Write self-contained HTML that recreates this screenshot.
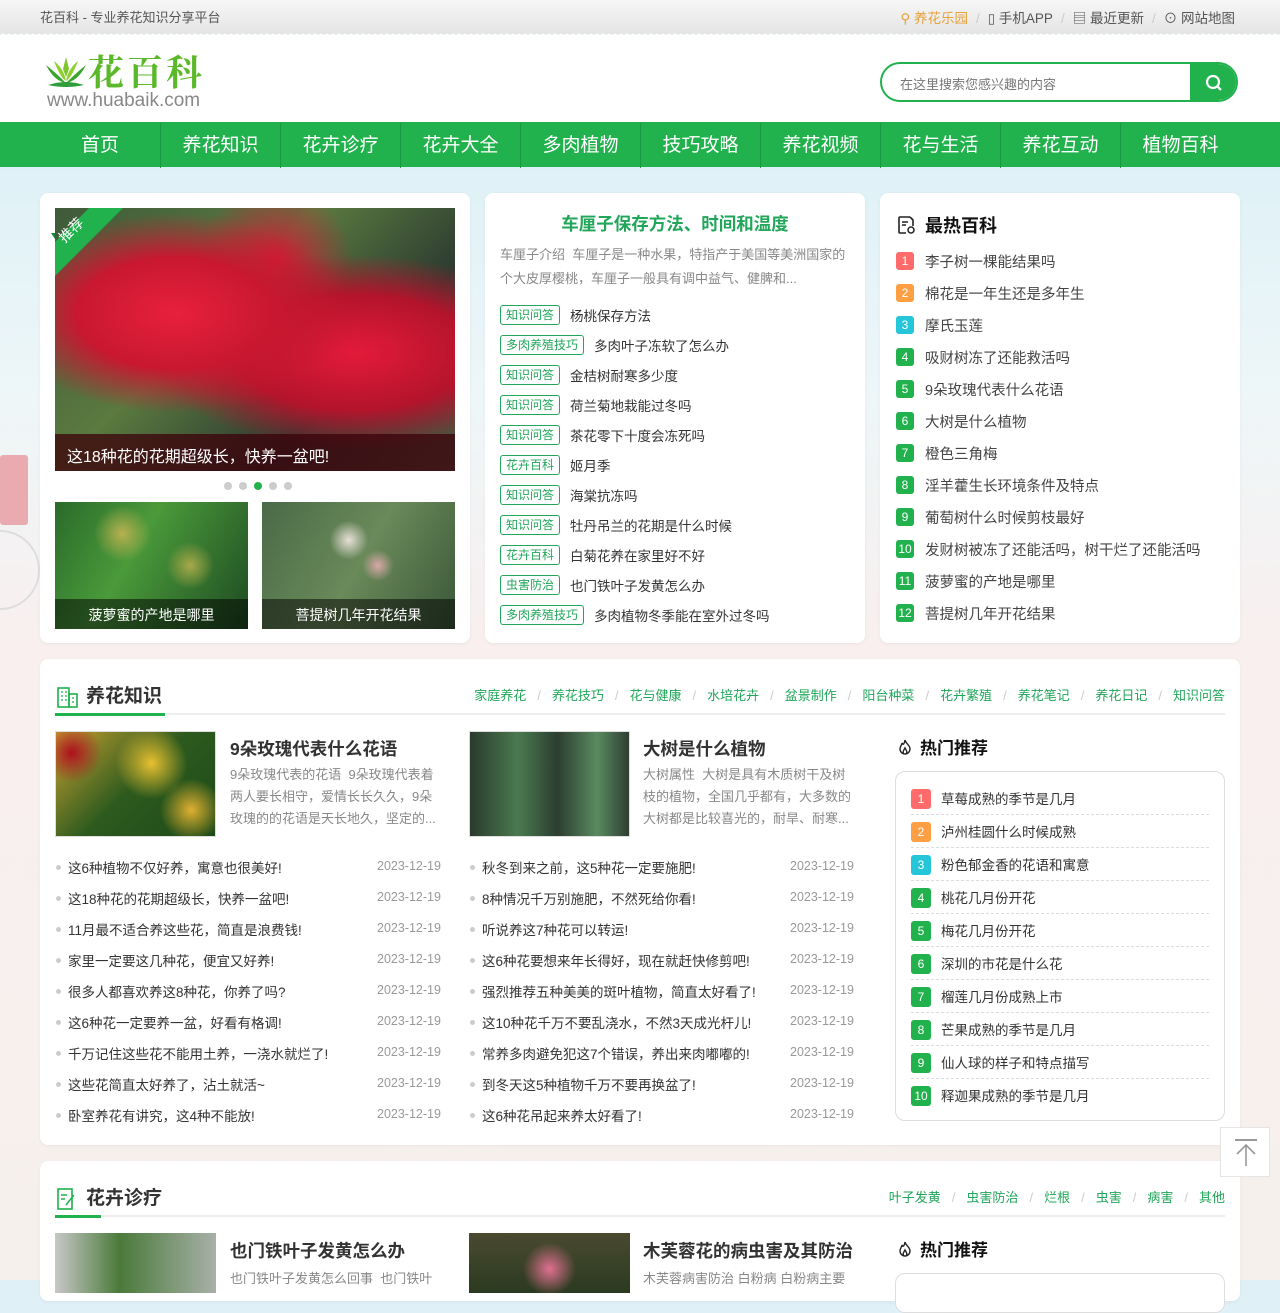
<!DOCTYPE html>
<html><head><meta charset="utf-8"><style>
*{margin:0;padding:0;box-sizing:border-box}
body{width:1280px;height:1280px;overflow:hidden;position:relative;font-family:"Liberation Sans","Noto Sans CJK SC",sans-serif;background:linear-gradient(180deg,#dff1f7 167px,#eef6f8 400px,#f8efee 650px,#f6f0ed 1280px);color:#333}
.a{position:absolute}
.top{left:0;top:0;width:1280px;height:34px;background:linear-gradient(#f7f7f7,#e4e4e4);font-size:13px;color:#555}
.zig{left:0;top:32px;width:1280px;height:4px;background:radial-gradient(circle at 3px 4px,#fff 2.2px,transparent 2.6px) 0 0/6px 4px}
.hdr{left:0;top:35px;width:1280px;height:87px;background:#fff}
.nav{left:0;top:122px;width:1280px;height:45px;background:#21b14d}
.nav span{position:absolute;top:1px;width:120px;height:45px;line-height:45px;text-align:center;color:#fff;font-size:19px;border-left:1px solid #1a9a47}
.card{background:#fff;border-radius:8px;box-shadow:0 1px 4px rgba(0,0,0,.05)}
.tag{position:absolute;left:500px;height:20px;line-height:18px;border:1px solid #21a65a;color:#21a65a;font-size:12px;padding:0 5px;border-radius:3px}
.tt{position:absolute;font-size:13.5px;color:#333}
.bd{position:absolute;width:18px;height:18px;border-radius:3px;color:#fff;font-size:12px;text-align:center;line-height:18px;background:#21b14d}
.ht{position:absolute;left:925px;font-size:14.5px;color:#444}
.li{position:absolute;font-size:13.5px;color:#333}
.li:before{content:"";position:absolute;left:-12px;top:8px;width:5px;height:5px;border-radius:50%;background:#ccc}
.dt{position:absolute;font-size:12.5px;color:#999}
.hr2{position:absolute;left:941px;font-size:13.5px;color:#333}
.dash{position:absolute;left:911px;width:298px;border-top:1px dashed #ddd}
.sl{color:#ccc;margin:0 7px}
.sk{color:#ccc;margin:0 11px}
</style></head><body>
<div class="a top"><span class="a" style="left:40px;top:7px">花百科 - 专业养花知识分享平台</span>
<span class="a" style="right:45px;top:7px;color:#555;font-size:13.5px"><span style="color:#e6a23c">⚲ 养花乐园</span><span class="sk" style="margin:0 8px">/</span>▯ 手机APP<span class="sk" style="margin:0 8px">/</span>▤ 最近更新<span class="sk" style="margin:0 8px">/</span>⊙ 网站地图</span></div>
<div class="a zig"></div>
<div class="a hdr">
<svg class="a" style="left:44px;top:20px" width="44" height="36" viewBox="0 0 44 36"><path d="M22 2 L25 14 L22 22 L19 14Z" fill="#7cc52b"/><path d="M2 10 Q10 26 22 28 Q12 18 2 10Z" fill="#3aa52c"/><path d="M42 10 Q34 26 22 28 Q32 18 42 10Z" fill="#3aa52c"/><path d="M10 6 Q16 22 22 26 Q20 14 10 6Z" fill="#8ccf2e"/><path d="M34 6 Q28 22 22 26 Q24 14 34 6Z" fill="#8ccf2e"/><path d="M4 30 Q22 24 40 30 Q22 34 4 30Z" fill="#2e9e3a"/></svg>
<span class="a" style="left:88px;top:14px;font-size:36px;font-weight:bold;color:#5bb82a;letter-spacing:3px;line-height:44px;font-family:'Noto Serif CJK SC',serif">花百科</span>
<span class="a" style="left:47px;top:55px;font-size:19px;color:#888;line-height:22px">www.huabaik.com</span>
<div class="a" style="left:880px;top:27px;width:358px;height:40px;border:2px solid #21b14d;border-radius:20px;overflow:hidden"><span class="a" style="left:18px;top:10px;font-size:13px;color:#777">在这里搜索您感兴趣的内容</span><div class="a" style="left:308px;top:0;width:50px;height:36px;background:#21b14d"><svg class="a" style="left:14px;top:9px" width="20" height="20" viewBox="0 0 20 20"><circle cx="9" cy="9" r="6" fill="none" stroke="#fff" stroke-width="2.2"/><path d="M13 13 L17 17" stroke="#fff" stroke-width="2.2"/></svg></div></div>
</div>
<div class="a nav">
<span style="left:40px;border:0">首页</span><span style="left:160px">养花知识</span><span style="left:280px">花卉诊疗</span><span style="left:400px">花卉大全</span><span style="left:520px">多肉植物</span><span style="left:640px">技巧攻略</span><span style="left:760px">养花视频</span><span style="left:880px">花与生活</span><span style="left:1000px">养花互动</span><span style="left:1120px">植物百科</span></div>
<!-- decor left -->
<div class="a" style="left:0;top:455px;width:28px;height:70px;background:#e9aab0;border-radius:3px"></div>
<div class="a" style="left:-40px;top:530px;width:80px;height:80px;border-radius:50%;border:2px solid #ddd"></div>
<!-- card 1 -->
<div class="a card" style="left:40px;top:193px;width:430px;height:450px">
<div class="a" style="left:15px;top:15px;width:400px;height:263px;overflow:hidden;background:radial-gradient(ellipse at 30% 40%,#e8203c 0,#c81830 25%,transparent 45%),radial-gradient(ellipse at 75% 55%,#e31a3a 0,#b4142c 28%,transparent 48%),radial-gradient(ellipse at 55% 20%,#d41a34 0,transparent 25%),linear-gradient(135deg,#3e5a3a,#5a7a40 40%,#2c3a30 70%,#4a5e44)">
<div class="a" style="left:0;top:226px;width:400px;height:37px;background:rgba(60,0,10,.75)"></div>
<span class="a" style="left:12px;top:235px;color:#fff;font-size:16px">这18种花的花期超级长，快养一盆吧!</span>
<div class="a" style="left:-30px;top:14px;width:110px;height:24px;background:#21b14d;transform:rotate(-45deg)"></div>
<span class="a" style="left:2px;top:12px;color:#fff;font-size:14px;transform:rotate(-45deg)">推荐</span></div>
<div class="a" style="left:11px;top:40px;width:0;height:0;border-top:6px solid #178a3a;border-left:4px solid transparent"></div>
<div class="a" style="left:184px;top:289px;width:8px;height:8px;border-radius:50%;background:#ccc;box-shadow:15px 0 #ccc,30px 0 #21b14d,45px 0 #ccc,60px 0 #ccc"></div>
<div class="a" style="left:15px;top:309px;width:193px;height:127px;overflow:hidden;background:radial-gradient(circle at 35% 25%,#b8b050 0,transparent 18%),radial-gradient(circle at 70% 50%,#a8a848 0,transparent 16%),linear-gradient(120deg,#2a6a2a,#4a9a3a 40%,#1e4a22)"><div class="a" style="left:0;top:97px;width:193px;height:30px;background:rgba(0,0,0,.5)"></div><span class="a" style="left:0;width:193px;text-align:center;top:103px;color:#fff;font-size:14px">菠萝蜜的产地是哪里</span></div>
<div class="a" style="left:222px;top:309px;width:193px;height:127px;overflow:hidden;background:radial-gradient(circle at 45% 30%,#e8e0d8 0,transparent 14%),radial-gradient(circle at 60% 50%,#d8a8a8 0,transparent 12%),linear-gradient(120deg,#4a6a48,#6a8a5a 50%,#3a5638)"><div class="a" style="left:0;top:97px;width:193px;height:30px;background:rgba(0,0,0,.5)"></div><span class="a" style="left:0;width:193px;text-align:center;top:103px;color:#fff;font-size:14px">菩提树几年开花结果</span></div>
</div>
<!-- card 2 -->
<div class="a card" style="left:485px;top:193px;width:380px;height:450px"></div>
<span class="a" style="left:485px;width:380px;text-align:center;top:211px;font-size:17.5px;font-weight:bold;color:#21a65a">车厘子保存方法、时间和温度</span>
<span class="a" style="left:500px;top:243px;width:346px;font-size:13px;color:#888;line-height:24px">车厘子介绍&nbsp;&nbsp;车厘子是一种水果，特指产于美国等美洲国家的个大皮厚樱桃，车厘子一般具有调中益气、健脾和...</span>
<span class="tag" style="top:305px">知识问答</span><span class="tt" style="left:570px;top:305px">杨桃保存方法</span>
<span class="tag" style="top:335px">多肉养殖技巧</span><span class="tt" style="left:594px;top:335px">多肉叶子冻软了怎么办</span>
<span class="tag" style="top:365px">知识问答</span><span class="tt" style="left:570px;top:365px">金桔树耐寒多少度</span>
<span class="tag" style="top:395px">知识问答</span><span class="tt" style="left:570px;top:395px">荷兰菊地栽能过冬吗</span>
<span class="tag" style="top:425px">知识问答</span><span class="tt" style="left:570px;top:425px">茶花零下十度会冻死吗</span>
<span class="tag" style="top:455px">花卉百科</span><span class="tt" style="left:570px;top:455px">姬月季</span>
<span class="tag" style="top:485px">知识问答</span><span class="tt" style="left:570px;top:485px">海棠抗冻吗</span>
<span class="tag" style="top:515px">知识问答</span><span class="tt" style="left:570px;top:515px">牡丹吊兰的花期是什么时候</span>
<span class="tag" style="top:545px">花卉百科</span><span class="tt" style="left:570px;top:545px">白菊花养在家里好不好</span>
<span class="tag" style="top:575px">虫害防治</span><span class="tt" style="left:570px;top:575px">也门铁叶子发黄怎么办</span>
<span class="tag" style="top:605px">多肉养殖技巧</span><span class="tt" style="left:594px;top:605px">多肉植物冬季能在室外过冬吗</span>
<!-- card 3 -->
<div class="a card" style="left:880px;top:193px;width:360px;height:450px"></div>
<svg class="a" style="left:896px;top:215px" width="20" height="20" viewBox="0 0 20 20"><path d="M14 2H4a1 1 0 0 0-1 1v14a1 1 0 0 0 1 1h6M14 2l3 3v6" fill="none" stroke="#222" stroke-width="1.6"/><path d="M6 7h6M6 10h4" stroke="#222" stroke-width="1.5"/><circle cx="15" cy="15" r="3" fill="none" stroke="#222" stroke-width="1.5"/></svg>
<span class="a" style="left:925px;top:212px;font-size:18px;font-weight:bold;color:#111">最热百科</span>
<div class="bd" style="left:896px;top:252px;background:#ff6b6b">1</div><span class="ht" style="top:251px">李子树一棵能结果吗</span>
<div class="bd" style="left:896px;top:284px;background:#ff9f43">2</div><span class="ht" style="top:283px">棉花是一年生还是多年生</span>
<div class="bd" style="left:896px;top:316px;background:#26c6da">3</div><span class="ht" style="top:315px">摩氏玉莲</span>
<div class="bd" style="left:896px;top:348px">4</div><span class="ht" style="top:347px">吸财树冻了还能救活吗</span>
<div class="bd" style="left:896px;top:380px">5</div><span class="ht" style="top:379px">9朵玫瑰代表什么花语</span>
<div class="bd" style="left:896px;top:412px">6</div><span class="ht" style="top:411px">大树是什么植物</span>
<div class="bd" style="left:896px;top:444px">7</div><span class="ht" style="top:443px">橙色三角梅</span>
<div class="bd" style="left:896px;top:476px">8</div><span class="ht" style="top:475px">淫羊藿生长环境条件及特点</span>
<div class="bd" style="left:896px;top:508px">9</div><span class="ht" style="top:507px">葡萄树什么时候剪枝最好</span>
<div class="bd" style="left:896px;top:540px">10</div><span class="ht" style="top:539px">发财树被冻了还能活吗，树干烂了还能活吗</span>
<div class="bd" style="left:896px;top:572px">11</div><span class="ht" style="top:571px">菠萝蜜的产地是哪里</span>
<div class="bd" style="left:896px;top:604px">12</div><span class="ht" style="top:603px">菩提树几年开花结果</span>
<!-- section 1 -->
<div class="a card" style="left:40px;top:659px;width:1200px;height:486px"></div>
<svg class="a" style="left:56px;top:685px" width="24" height="24" viewBox="0 0 24 24"><rect x="2" y="3" width="11" height="19" fill="none" stroke="#21b14d" stroke-width="1.6"/><rect x="13" y="9" width="8" height="13" fill="none" stroke="#21b14d" stroke-width="1.6"/><path d="M5 7h2M9 7h2M5 11h2M9 11h2M5 15h2M9 15h2M16 13h2M16 17h2" stroke="#21b14d" stroke-width="1.3"/></svg>
<span class="a" style="left:86px;top:681px;font-size:19px;font-weight:bold;color:#333">养花知识</span>
<div class="a" style="left:55px;top:713px;width:1170px;height:2px;background:#eee"></div>
<div class="a" style="left:55px;top:713px;width:110px;height:3px;background:#21b14d"></div>
<span class="a" style="right:55px;top:685px;font-size:13px;color:#21a65a">家庭养花<span class="sk">/</span>养花技巧<span class="sk">/</span>花与健康<span class="sk">/</span>水培花卉<span class="sk">/</span>盆景制作<span class="sk">/</span>阳台种菜<span class="sk">/</span>花卉繁殖<span class="sk">/</span>养花笔记<span class="sk">/</span>养花日记<span class="sk">/</span>知识问答</span>
<div class="a" style="left:55px;top:731px;width:161px;height:106px;background:radial-gradient(circle at 60% 30%,#e8c030 0,transparent 30%),radial-gradient(circle at 10% 20%,#b01020 0,transparent 18%),radial-gradient(circle at 85% 75%,#e0b030 0,transparent 20%),linear-gradient(135deg,#c8a030,#2c5a1e 50%,#1e4a18);border:1px solid #ddd"></div>
<span class="a" style="left:230px;top:736px;font-size:17.5px;font-weight:bold;color:#333">9朵玫瑰代表什么花语</span>
<span class="a" style="left:230px;top:764px;width:224px;font-size:13px;color:#888;line-height:22px">9朵玫瑰代表的花语&nbsp;&nbsp;9朵玫瑰代表着<br>两人要长相守，爱情长长久久，9朵<br>玫瑰的的花语是天长地久，坚定的...</span>
<div class="a" style="left:469px;top:731px;width:161px;height:106px;background:linear-gradient(90deg,#2a3a2c,#4a7a50 30%,#2c3e30 55%,#5a8a60 80%,#2e3e32);border:1px solid #ddd"></div>
<span class="a" style="left:643px;top:736px;font-size:17.5px;font-weight:bold;color:#333">大树是什么植物</span>
<span class="a" style="left:643px;top:764px;width:230px;font-size:13px;color:#888;line-height:22px">大树属性&nbsp;&nbsp;大树是具有木质树干及树<br>枝的植物，全国几乎都有，大多数的<br>大树都是比较喜光的，耐旱、耐寒...</span>
<span class="li" style="left:68px;top:857px">这6种植物不仅好养，寓意也很美好!</span>
<span class="li" style="left:68px;top:888px">这18种花的花期超级长，快养一盆吧!</span>
<span class="li" style="left:68px;top:919px">11月最不适合养这些花，简直是浪费钱!</span>
<span class="li" style="left:68px;top:950px">家里一定要这几种花，便宜又好养!</span>
<span class="li" style="left:68px;top:981px">很多人都喜欢养这8种花，你养了吗?</span>
<span class="li" style="left:68px;top:1012px">这6种花一定要养一盆，好看有格调!</span>
<span class="li" style="left:68px;top:1043px">千万记住这些花不能用土养，一浇水就烂了!</span>
<span class="li" style="left:68px;top:1074px">这些花简直太好养了，沾土就活~</span>
<span class="li" style="left:68px;top:1105px">卧室养花有讲究，这4种不能放!</span>
<span class="li" style="left:482px;top:857px">秋冬到来之前，这5种花一定要施肥!</span>
<span class="li" style="left:482px;top:888px">8种情况千万别施肥，不然死给你看!</span>
<span class="li" style="left:482px;top:919px">听说养这7种花可以转运!</span>
<span class="li" style="left:482px;top:950px">这6种花要想来年长得好，现在就赶快修剪吧!</span>
<span class="li" style="left:482px;top:981px">强烈推荐五种美美的斑叶植物，简直太好看了!</span>
<span class="li" style="left:482px;top:1012px">这10种花千万不要乱浇水，不然3天成光杆儿!</span>
<span class="li" style="left:482px;top:1043px">常养多肉避免犯这7个错误，养出来肉嘟嘟的!</span>
<span class="li" style="left:482px;top:1074px">到冬天这5种植物千万不要再换盆了!</span>
<span class="li" style="left:482px;top:1105px">这6种花吊起来养太好看了!</span>
<span class="dt" style="left:377px;top:859px">2023-12-19</span><span class="dt" style="left:377px;top:890px">2023-12-19</span><span class="dt" style="left:377px;top:921px">2023-12-19</span><span class="dt" style="left:377px;top:952px">2023-12-19</span><span class="dt" style="left:377px;top:983px">2023-12-19</span><span class="dt" style="left:377px;top:1014px">2023-12-19</span><span class="dt" style="left:377px;top:1045px">2023-12-19</span><span class="dt" style="left:377px;top:1076px">2023-12-19</span><span class="dt" style="left:377px;top:1107px">2023-12-19</span>
<span class="dt" style="left:790px;top:859px">2023-12-19</span><span class="dt" style="left:790px;top:890px">2023-12-19</span><span class="dt" style="left:790px;top:921px">2023-12-19</span><span class="dt" style="left:790px;top:952px">2023-12-19</span><span class="dt" style="left:790px;top:983px">2023-12-19</span><span class="dt" style="left:790px;top:1014px">2023-12-19</span><span class="dt" style="left:790px;top:1045px">2023-12-19</span><span class="dt" style="left:790px;top:1076px">2023-12-19</span><span class="dt" style="left:790px;top:1107px">2023-12-19</span>
<svg class="a" style="left:896px;top:738px" width="18" height="18" viewBox="0 0 18 18"><path d="M9 2 C10 6 14 7 14 11 A5 5 0 0 1 4 11 C4 8 6 7 6 5 C7 7 8 7 9 2Z M8 16 C6 14 8 12 9 10 C10 12 12 14 10 16" fill="none" stroke="#222" stroke-width="1.4"/></svg>
<span class="a" style="left:920px;top:734px;font-size:17px;font-weight:bold;color:#111">热门推荐</span>
<div class="a" style="left:895px;top:771px;width:330px;height:350px;border:1px solid #ddd;border-radius:10px;background:#fff"></div>
<div class="bd" style="left:911px;top:789px;width:20px;height:20px;line-height:20px;background:#ff6b6b">1</div><span class="hr2" style="top:788px">草莓成熟的季节是几月</span><div class="dash" style="top:814px"></div>
<div class="bd" style="left:911px;top:822px;width:20px;height:20px;line-height:20px;background:#ff9f43">2</div><span class="hr2" style="top:821px">泸州桂圆什么时候成熟</span><div class="dash" style="top:847px"></div>
<div class="bd" style="left:911px;top:855px;width:20px;height:20px;line-height:20px;background:#26c6da">3</div><span class="hr2" style="top:854px">粉色郁金香的花语和寓意</span><div class="dash" style="top:880px"></div>
<div class="bd" style="left:911px;top:888px;width:20px;height:20px;line-height:20px">4</div><span class="hr2" style="top:887px">桃花几月份开花</span><div class="dash" style="top:913px"></div>
<div class="bd" style="left:911px;top:921px;width:20px;height:20px;line-height:20px">5</div><span class="hr2" style="top:920px">梅花几月份开花</span><div class="dash" style="top:946px"></div>
<div class="bd" style="left:911px;top:954px;width:20px;height:20px;line-height:20px">6</div><span class="hr2" style="top:953px">深圳的市花是什么花</span><div class="dash" style="top:979px"></div>
<div class="bd" style="left:911px;top:987px;width:20px;height:20px;line-height:20px">7</div><span class="hr2" style="top:986px">榴莲几月份成熟上市</span><div class="dash" style="top:1012px"></div>
<div class="bd" style="left:911px;top:1020px;width:20px;height:20px;line-height:20px">8</div><span class="hr2" style="top:1019px">芒果成熟的季节是几月</span><div class="dash" style="top:1045px"></div>
<div class="bd" style="left:911px;top:1053px;width:20px;height:20px;line-height:20px">9</div><span class="hr2" style="top:1052px">仙人球的样子和特点描写</span><div class="dash" style="top:1078px"></div>
<div class="bd" style="left:911px;top:1086px;width:20px;height:20px;line-height:20px">10</div><span class="hr2" style="top:1085px">释迦果成熟的季节是几月</span>
<!-- section 2 -->
<div class="a card" style="left:40px;top:1161px;width:1200px;height:140px"></div>
<svg class="a" style="left:56px;top:1187px" width="22" height="24" viewBox="0 0 22 24"><rect x="2" y="2" width="14" height="20" fill="none" stroke="#21b14d" stroke-width="1.6"/><path d="M5 8h6M5 12h4M10 18l8-10" stroke="#21b14d" stroke-width="1.5"/></svg>
<span class="a" style="left:86px;top:1183px;font-size:19px;font-weight:bold;color:#333">花卉诊疗</span>
<div class="a" style="left:55px;top:1215px;width:1170px;height:2px;background:#eee"></div>
<div class="a" style="left:55px;top:1215px;width:46px;height:3px;background:#21b14d"></div>
<span class="a" style="right:55px;top:1187px;font-size:13px;color:#21a65a">叶子发黄<span class="sk">/</span>虫害防治<span class="sk">/</span>烂根<span class="sk">/</span>虫害<span class="sk">/</span>病害<span class="sk">/</span>其他</span>
<div class="a" style="left:55px;top:1233px;width:161px;height:60px;background:linear-gradient(90deg,#c8c8c8,#4a7a3a 40%,#a8b0a8)"></div>
<span class="a" style="left:230px;top:1238px;font-size:17.5px;font-weight:bold;color:#333">也门铁叶子发黄怎么办</span>
<span class="a" style="left:230px;top:1268px;font-size:13px;color:#888">也门铁叶子发黄怎么回事&nbsp;&nbsp;也门铁叶</span>
<div class="a" style="left:469px;top:1233px;width:161px;height:60px;background:radial-gradient(circle at 50% 60%,#e07090 0,transparent 30%),linear-gradient(#4a4a30,#2a3a20)"></div>
<span class="a" style="left:643px;top:1238px;font-size:17.5px;font-weight:bold;color:#333">木芙蓉花的病虫害及其防治</span>
<span class="a" style="left:643px;top:1268px;font-size:13px;color:#888">木芙蓉病害防治 白粉病 白粉病主要</span>
<svg class="a" style="left:896px;top:1240px" width="18" height="18" viewBox="0 0 18 18"><path d="M9 2 C10 6 14 7 14 11 A5 5 0 0 1 4 11 C4 8 6 7 6 5 C7 7 8 7 9 2Z M8 16 C6 14 8 12 9 10 C10 12 12 14 10 16" fill="none" stroke="#222" stroke-width="1.4"/></svg>
<span class="a" style="left:920px;top:1236px;font-size:17px;font-weight:bold;color:#111">热门推荐</span>
<div class="a" style="left:895px;top:1273px;width:330px;height:40px;border:1px solid #ddd;border-radius:10px;background:#fff"></div>
<!-- back top -->
<div class="a" style="left:1220px;top:1127px;width:50px;height:50px;background:#fff;border:1px solid #e5e5e5"><svg class="a" style="left:12px;top:10px" width="26" height="30" viewBox="0 0 26 30"><path d="M2 2h22" stroke="#999" stroke-width="2"/><path d="M13 8v20M4 16l9-9 9 9" fill="none" stroke="#999" stroke-width="1.6"/></svg></div>
</body></html>
